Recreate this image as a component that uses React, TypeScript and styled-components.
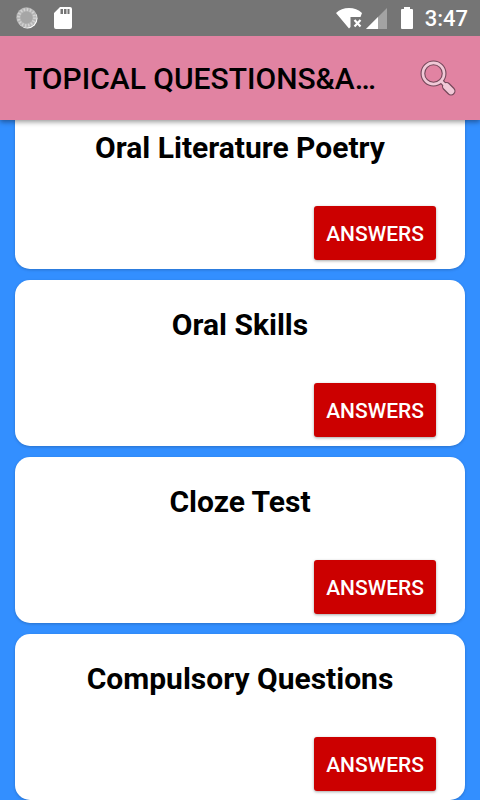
import React from "react";
import styled, { createGlobalStyle } from "styled-components";

const GlobalStyle = createGlobalStyle`
  *, *::before, *::after { box-sizing: border-box; }
  body {
    margin: 0;
    background: #338fff;
    font-family: Roboto, "Noto Sans", sans-serif;
    color: #000;
  }
`;

const Screen = styled.div`
  display: flex;
  flex-direction: column;
  min-height: 100vh;
`;

const TopArea = styled.header`
  position: sticky;
  top: 0;
  z-index: 1;
  box-shadow: 0 2px 5px rgba(0, 0, 0, 0.4);
`;

const StatusBar = styled.div`
  display: flex;
  align-items: center;
  justify-content: space-between;
  height: 36px;
  padding: 0 12px 0 16px;
  background: #757575;
  color: #fff;
`;

const StatusGroup = styled.div<{ $gap: number }>`
  display: flex;
  align-items: center;
  gap: ${(p) => p.$gap}px;
`;

const Clock = styled.time`
  padding-top: 2px;
  font-size: 22px;
  font-weight: 500;
  line-height: 24px;
`;

const AppBar = styled.div`
  display: flex;
  align-items: center;
  justify-content: space-between;
  height: 84px;
  padding: 0 18px 0 24px;
  background: #e183a2;
`;

const Title = styled.h1`
  margin: 0;
  padding-top: 2px;
  min-width: 0;
  overflow: hidden;
  text-overflow: ellipsis;
  white-space: nowrap;
  font-size: 30px;
  font-weight: 500;
  line-height: 36px;
`;

const IconButton = styled.button`
  display: flex;
  flex: none;
  padding: 0;
  border: 0;
  background: none;
  cursor: pointer;
`;

const TopicList = styled.main`
  display: flex;
  flex-direction: column;
  gap: 11px;
  margin-top: -17px;
  padding: 0 15px;
`;

const Card = styled.article`
  display: flex;
  flex-direction: column;
  justify-content: space-between;
  min-height: 166px;
  padding: 27px 29px 9px;
  border-radius: 15px;
  background: #fff;
  box-shadow: 0 1px 3px rgba(0, 0, 0, 0.2);
`;

const TopicName = styled.h2`
  margin: 0;
  text-align: center;
  font-size: 30px;
  font-weight: 700;
  line-height: 36px;
`;

const AnswersButton = styled.button`
  align-self: flex-end;
  height: 54px;
  padding: 2px 12px 0;
  border: 0;
  border-radius: 3px;
  background: #cc0000;
  color: #fff;
  font-family: inherit;
  font-size: 21px;
  font-weight: 500;
  line-height: 24px;
  cursor: pointer;
  box-shadow: 0 1px 3px rgba(0, 0, 0, 0.35);
`;

const SyncIcon = () => (
  <svg width="22" height="22" viewBox="0 0 22 22" aria-hidden="true">
    <circle cx="11.5" cy="11.5" r="10" fill="#fff" />
    <circle cx="10.5" cy="10.5" r="10.2" fill="#b4b4b4" />
    <circle cx="10.5" cy="10.5" r="8" fill="none" stroke="#d2d2d2" strokeWidth="3" strokeDasharray="1.5 1.64" />
    <circle cx="10.5" cy="10.5" r="6" fill="#a6a6a6" />
  </svg>
);

const SdCardIcon = () => (
  <svg width="18" height="22" viewBox="0 0 18 22" aria-hidden="true">
    <path
      fill="#fff"
      fillRule="evenodd"
      d="M6 0H16a2 2 0 0 1 2 2V20a2 2 0 0 1-2 2H2a2 2 0 0 1-2-2V6ZM6.500 2V7H9V2ZM10 2V7H12.500V2ZM13.500 2V7H15.500V2Z"
    />
  </svg>
);

const WifiIcon = () => (
  <svg width="26" height="22" viewBox="0 0 26 22" aria-hidden="true">
    <path fill="#fff" d="M0 6C3.500 2.500 8 1 13 1S22.500 2.500 26 6L24.500 10H14.500V20L13 21.500Z" />
    <path d="M18.500 13l6 6.500M24.500 13l-6 6.500" stroke="#fff" strokeWidth="2.200" />
  </svg>
);

const SignalIcon = () => (
  <svg width="21" height="22" viewBox="0 0 21 22" aria-hidden="true">
    <path fill="#a3a3a3" d="M21 1V22H0Z" />
    <path fill="#fff" d="M12 10V22H0Z" />
  </svg>
);

const BatteryIcon = () => (
  <svg width="12" height="22" viewBox="0 0 12 22" aria-hidden="true">
    <path fill="#fff" d="M3 0H9V2H11a1 1 0 0 1 1 1V21a1 1 0 0 1-1 1H1a1 1 0 0 1-1-1V3a1 1 0 0 1 1-1H3Z" />
  </svg>
);

const SearchIcon = () => (
  <svg width="42" height="42" viewBox="0 0 42 42" aria-hidden="true">
    <path d="M21 24L26 29" stroke="#74485a" strokeWidth="5" />
    <path d="M26.500 29.500L31 34" stroke="#74485a" strokeWidth="9" strokeLinecap="round" />
    <circle cx="13.500" cy="16.500" r="10.600" fill="none" stroke="#74485a" strokeWidth="4.800" />
    <circle cx="13.500" cy="16.500" r="10.600" fill="none" stroke="#f1c9d7" strokeWidth="2.600" />
    <path d="M21 24L26 29" stroke="#f1c9d7" strokeWidth="2.600" />
    <path d="M26.500 29.500L31 34" stroke="#f1c9d7" strokeWidth="6.600" strokeLinecap="round" />
  </svg>
);

const topics = ["Oral Literature Poetry", "Oral Skills", "Cloze Test", "Compulsory Questions"];

export default function App() {
  return (
    <Screen>
      <GlobalStyle />
      <TopArea>
        <StatusBar>
          <StatusGroup $gap={16}>
            <SyncIcon />
            <SdCardIcon />
          </StatusGroup>
          <StatusGroup $gap={12}>
            <StatusGroup $gap={14}>
              <StatusGroup $gap={4}>
                <WifiIcon />
                <SignalIcon />
              </StatusGroup>
              <BatteryIcon />
            </StatusGroup>
            <Clock>3:47</Clock>
          </StatusGroup>
        </StatusBar>
        <AppBar>
          <Title>TOPICAL QUESTIONS&amp;A…</Title>
          <IconButton type="button" aria-label="Search">
            <SearchIcon />
          </IconButton>
        </AppBar>
      </TopArea>
      <TopicList>
        {topics.map((topic) => (
          <Card key={topic}>
            <TopicName>{topic}</TopicName>
            <AnswersButton type="button">ANSWERS</AnswersButton>
          </Card>
        ))}
      </TopicList>
    </Screen>
  );
}
